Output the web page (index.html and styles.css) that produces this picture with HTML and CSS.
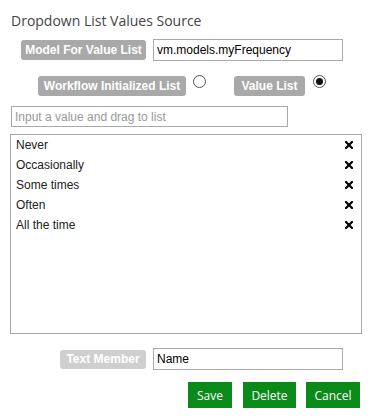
FILE: index.html
```html
<!DOCTYPE html>
<html>
<head>
<meta charset="utf-8">
<link rel="stylesheet" href="styles.css">
</head>
<body>
<div class="panel">
  <h1 class="title">Dropdown List Values Source</h1>
  <div class="row row-model">
    <span class="tag tag-model">Model For Value List</span>
    <input class="field field-wide" type="text" value="vm.models.myFrequency">
  </div>
  <div class="row row-source">
    <span class="tag tag-workflow">Workflow Initialized List</span>
    <span class="radio radio-first"></span>
    <span class="tag tag-value">Value List</span>
    <span class="radio radio-second checked"></span>
  </div>
  <input class="field field-drag" type="text" placeholder="Input a value and drag to list">
  <ul class="values">
    <li class="value"><span>Never</span><svg class="remove" width="8" height="8" viewBox="0 0 8 8"><path d="M1 1L7 7M7 1L1 7" stroke="#000" stroke-width="2.2" stroke-linecap="square"/></svg></li>
    <li class="value"><span>Occasionally</span><svg class="remove" width="8" height="8" viewBox="0 0 8 8"><path d="M1 1L7 7M7 1L1 7" stroke="#000" stroke-width="2.2" stroke-linecap="square"/></svg></li>
    <li class="value"><span>Some times</span><svg class="remove" width="8" height="8" viewBox="0 0 8 8"><path d="M1 1L7 7M7 1L1 7" stroke="#000" stroke-width="2.2" stroke-linecap="square"/></svg></li>
    <li class="value"><span>Often</span><svg class="remove" width="8" height="8" viewBox="0 0 8 8"><path d="M1 1L7 7M7 1L1 7" stroke="#000" stroke-width="2.2" stroke-linecap="square"/></svg></li>
    <li class="value"><span>All the time</span><svg class="remove" width="8" height="8" viewBox="0 0 8 8"><path d="M1 1L7 7M7 1L1 7" stroke="#000" stroke-width="2.2" stroke-linecap="square"/></svg></li>
  </ul>
  <div class="row row-text">
    <span class="tag tag-muted">Text Member</span>
    <input class="field field-wide" type="text" value="Name">
  </div>
  <div class="actions">
    <button class="btn btn-save">Save</button>
    <button class="btn btn-delete">Delete</button>
    <button class="btn btn-cancel">Cancel</button>
  </div>
</div>
</body>
</html>
```
FILE: styles.css
```css
html, body {
  margin: 0;
  padding: 0;
  background: #fff;
}
.panel {
  width: 370px;
  font-family: "Liberation Sans", Arial, sans-serif;
  font-size: 12px;
  color: #222;
}
.title {
  margin: 11px 0 0 11px;
  height: 20px;
  line-height: 20px;
  font-family: "Open Sans", sans-serif;
  font-size: 14px;
  font-weight: normal;
  color: #444;
}
.row {
  display: flex;
  align-items: center;
}
.row-model {
  margin-top: 8px;
  padding-left: 21px;
  gap: 7px;
  height: 22px;
}
.row-source {
  margin-top: 15px;
  padding-left: 38px;
  height: 20px;
}
.row-text {
  margin-top: 14px;
  padding-left: 60px;
  gap: 7px;
  height: 22px;
}
.tag {
  display: flex;
  align-items: center;
  justify-content: center;
  height: 20px;
  border-radius: 3px;
  background: #a9a9a9;
  color: #fff;
  font-weight: bold;
  font-size: 12px;
  box-sizing: border-box;
  white-space: nowrap;
}
.tag-model { width: 125px; }
.tag-workflow { width: 148px; }
.tag-value { width: 71px; }
.tag-muted {
  width: 86px;
  height: 19px;
  background: #cfcfcf;
}
.radio {
  width: 13px;
  height: 13px;
  box-sizing: border-box;
  border: 1px solid #555;
  border-radius: 50%;
  background: #fff;
  margin-top: -10px;
  display: flex;
  align-items: center;
  justify-content: center;
}
.radio-first { margin-left: 7px; margin-right: 28px; }
.radio-second { margin-left: 8px; }
.radio.checked::after {
  content: "";
  width: 7px;
  height: 7px;
  border-radius: 50%;
  background: #111;
}
.field {
  display: block;
  box-sizing: border-box;
  height: 22px;
  border: 1px solid #a9a9a9;
  padding: 0 0 0 3px;
  margin: 0;
  font-family: "Liberation Sans", Arial, sans-serif;
  font-size: 12px;
  color: #000;
  outline: none;
  background: #fff;
}
.field-wide { width: 190px; }
.field-drag {
  margin: 10px 0 0 11px;
  width: 277px;
  height: 21px;
}
.field-drag::placeholder { color: #999; }
.values {
  list-style: none;
  margin: 7px 0 0 10px;
  padding: 0;
  width: 352px;
  height: 200px;
  box-sizing: border-box;
  border: 1px solid #a9a9a9;
}
.value {
  display: flex;
  align-items: center;
  justify-content: space-between;
  height: 20px;
  padding: 0 8px 0 5px;
  color: #222;
}
.remove { display: block; }
.actions {
  display: flex;
  justify-content: flex-end;
  margin-top: 12px;
  padding-right: 10px;
}
.btn {
  height: 26px;
  margin: 0 0 0 10px;
  padding: 0;
  border: none;
  background: #0a8a18;
  color: #fff;
  font-family: "Open Sans", sans-serif;
  font-size: 12px;
}
.btn-save { width: 44px; }
.btn-delete { width: 53px; margin-left: 11px; }
.btn-cancel { width: 54px; }
```
